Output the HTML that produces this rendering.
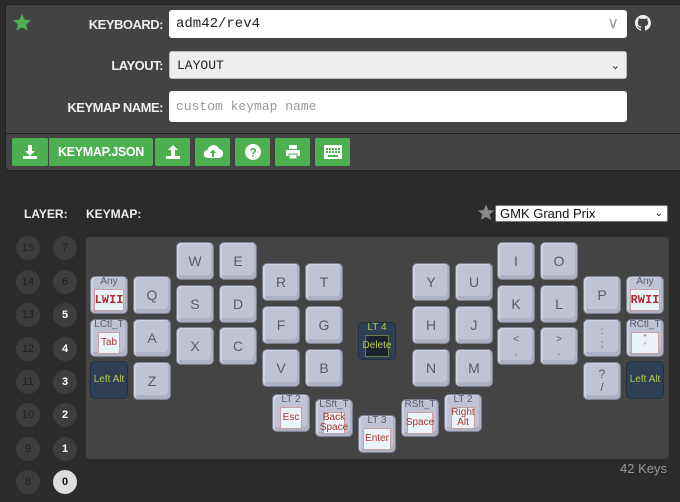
<!DOCTYPE html>
<html><head><meta charset="utf-8"><style>
*{box-sizing:border-box;margin:0;padding:0}
body{width:680px;height:502px;background:#2b2b2b;font-family:"Liberation Sans",sans-serif;position:relative;overflow:hidden}
.abs{position:absolute}
.panel{left:5px;top:4px;width:690px;height:167px;background:#434343;border:1px solid #222;border-radius:4px}
.lbl{position:absolute;color:#eee;font-weight:bold;font-size:13px;text-align:right;width:160px;letter-spacing:-0.5px}
.inp{position:absolute;left:169px;width:458px;border-radius:3px;font-family:"Liberation Mono",monospace;font-size:13px;padding-left:7px;color:#222}
.btn{position:absolute;top:138px;height:28px;background:#4caf50;border-radius:2px;color:#fff;display:flex;align-items:center;justify-content:center;font-weight:bold;font-size:12.5px;letter-spacing:-0.3px}
.kbd{left:86px;top:237px;width:583px;height:222px;background:#444;border-radius:4px}
.k{position:absolute;width:38px;height:38px;background:#c0c3d3;border:1px solid #7d8090;border-radius:5px;box-shadow:inset 2px 1px 0 #ced1df,inset -2px -4px 0 #aeb1c1;color:#555b6e;font-size:14px;display:flex;align-items:center;justify-content:center;flex-direction:column;text-align:center;line-height:1}
.k .t{font-size:10px;color:#555b6e;margin-top:-3px;margin-bottom:2px}
.k .in{background:#eaf4f8;border:1px solid #c9a0a0;color:#a33;font-size:10px;width:28px;height:22px;display:flex;align-items:center;justify-content:center;line-height:1}
.k.d{background:#2e3e55;border-color:#25303f;box-shadow:none;color:#b7c94a;font-size:10px}
.k.d .t{color:#b7c94a}
.c{position:absolute;width:24px;height:24px;border-radius:50%;background:#3d3d3d;color:#1e1e1e;font-size:11px;display:flex;align-items:center;justify-content:center}
.c.w{color:#fff;font-weight:bold}
</style></head><body>
<div class="abs panel"></div>
<svg class="abs" style="left:12px;top:13px" width="20" height="20" viewBox="0 0 24 24"><path d="M12 1l3.2 7 7.6.7-5.8 5 1.8 7.5L12 17.3 5.2 21.2 7 13.7 1.2 8.7l7.6-.7z" fill="#4caf50"/></svg>
<div class="lbl" style="left:3px;top:17px">KEYBOARD:</div>
<div class="inp" style="top:10px;height:28px;background:#fff;line-height:28px;font-size:14px">adm42/rev4<span style="position:absolute;right:8px;top:0;color:#999;font-family:'Liberation Sans';font-size:16px">&#8744;</span></div>
<svg class="abs" style="left:635px;top:15px" width="16" height="16" viewBox="0 0 16 16"><path fill="#eee" d="M8 0C3.6 0 0 3.6 0 8c0 3.5 2.3 6.5 5.5 7.6.4.1.5-.2.5-.4v-1.4c-2.2.5-2.7-1-2.7-1-.4-.9-.9-1.200-.9-1.2-.7-.5.1-.5.1-.5.8.1 1.2.8 1.2.8.7 1.2 1.9.9 2.3.7.1-.5.3-.9.5-1.1-1.8-.2-3.6-.9-3.6-4 0-.9.3-1.6.8-2.1-.1-.2-.4-1 .1-2.1 0 0 .7-.2 2.2.8.6-.2 1.3-.3 2-.3s1.4.1 2 .3c1.5-1 2.2-.8 2.2-.8.4 1.1.2 1.9.1 2.1.5.6.8 1.3.8 2.1 0 3.1-1.9 3.7-3.6 3.9.3.3.5.8.5 1.5v2.2c0 .2.1.5.6.4C13.7 14.5 16 11.5 16 8c0-4.4-3.6-8-8-8z"/></svg>
<div class="lbl" style="left:3px;top:58px">LAYOUT:</div>
<div class="inp" style="top:51px;height:28px;background:#eee;line-height:28px;border:1px solid #bbb">LAYOUT<span style="position:absolute;right:6px;top:0;font-size:11px;font-family:'Liberation Sans'">&#8964;</span></div>
<div class="lbl" style="left:3px;top:100px">KEYMAP NAME:</div>
<div class="inp" style="top:91px;height:31px;background:#fff;line-height:31px;color:#999">custom keymap name</div>
<div class="abs" style="left:5px;top:133px;width:680px;height:1px;background:#222"></div>
<div class="btn" style="left:12px;width:36px"><svg width="16" height="16" viewBox="0 0 16 16" fill="#fff"><path d="M6 1h4v6h3l-5 5-5-5h3z"/><rect x="1" y="12" width="14" height="3"/></svg></div>
<div class="btn" style="left:49px;width:104px">KEYMAP.JSON</div>
<div class="btn" style="left:155px;width:35px"><svg width="16" height="16" viewBox="0 0 16 16" fill="#fff"><path d="M6 12h4V6h3L8 1 3 6h3z"/><rect x="1" y="12" width="14" height="3"/></svg></div>
<div class="btn" style="left:195px;width:35px"><svg width="20" height="16" viewBox="0 0 20 16"><path fill="#fff" d="M5 14a4 4 0 0 1-.5-8A6 6 0 0 1 16 5a4.5 4.5 0 0 1-.5 9z"/><path fill="#4caf50" d="M9 13V9H7l3-3.5L13 9h-2v4z"/></svg></div>
<div class="btn" style="left:235px;width:35px"><svg width="16" height="16" viewBox="0 0 16 16"><circle cx="8" cy="8" r="8" fill="#fff"/><text x="8" y="12.5" text-anchor="middle" font-size="12" font-weight="bold" fill="#4caf50" font-family="Liberation Sans">?</text></svg></div>
<div class="btn" style="left:275px;width:35px"><svg width="16" height="16" viewBox="0 0 16 16" fill="#fff"><rect x="4" y="1" width="8" height="4"/><rect x="1" y="6" width="14" height="6" rx="1"/><rect x="4" y="10" width="8" height="5" stroke="#4caf50"/></svg></div>
<div class="btn" style="left:315px;width:35px"><svg width="18" height="14" viewBox="0 0 18 14"><rect width="18" height="14" rx="1" fill="#fff"/><g fill="#4caf50"><rect x="2" y="3" width="2" height="2"/><rect x="5" y="3" width="2" height="2"/><rect x="8" y="3" width="2" height="2"/><rect x="11" y="3" width="2" height="2"/><rect x="14" y="3" width="2" height="2"/><rect x="2" y="6" width="2" height="2"/><rect x="5" y="6" width="2" height="2"/><rect x="8" y="6" width="2" height="2"/><rect x="11" y="6" width="2" height="2"/><rect x="14" y="6" width="2" height="2"/><rect x="4" y="10" width="10" height="2"/></g></svg></div>
<div class="abs" style="left:24px;top:207px;color:#eee;font-weight:bold;font-size:12px">LAYER:</div>
<div class="abs" style="left:86px;top:207px;color:#eee;font-weight:bold;font-size:12px">KEYMAP:</div>
<svg class="abs" style="left:477px;top:204px" width="18" height="18" viewBox="0 0 24 24"><path d="M12 1l3.2 7 7.6.7-5.8 5 1.8 7.5L12 17.3 5.2 21.2 7 13.7 1.2 8.7l7.6-.7z" fill="#888"/></svg>
<div class="abs" style="left:495px;top:205px;width:173px;height:17px;background:#fff;border:1px solid #777;border-radius:2px;font-size:13px;padding-left:4px;line-height:15px;color:#111">GMK Grand Prix<span style="position:absolute;right:4px;font-size:10px">&#8964;</span></div>
<div class="abs kbd"></div>
<div class="c" style="left:16px;top:236px">15</div><div class="c" style="left:53px;top:236px">7</div>
<div class="c" style="left:16px;top:270px">14</div><div class="c" style="left:53px;top:270px">6</div>
<div class="c" style="left:16px;top:303px">13</div><div class="c w" style="left:53px;top:303px">5</div>
<div class="c" style="left:16px;top:337px">12</div><div class="c w" style="left:53px;top:337px">4</div>
<div class="c" style="left:16px;top:370px">11</div><div class="c w" style="left:53px;top:370px">3</div>
<div class="c" style="left:16px;top:403px">10</div><div class="c w" style="left:53px;top:403px">2</div>
<div class="c" style="left:16px;top:437px">9</div><div class="c w" style="left:53px;top:437px">1</div>
<div class="c" style="left:16px;top:470px">8</div><div class="c" style="left:53px;top:470px;background:#ddd;color:#111;font-weight:bold">0</div>

<div class="k" style="left:90px;top:276px"><div class="t">Any</div><div class="in" style="font-family:'Liberation Mono';font-size:12px;font-weight:bold;width:30px">LWII</div></div>
<div class="k" style="left:90px;top:319px"><div class="t">LCtl_T</div><div class="in" style="width:22px">Tab</div></div>
<div class="k d" style="left:90px;top:361px">Left Alt</div>
<div class="k" style="left:133px;top:276px">Q</div>
<div class="k" style="left:133px;top:319px">A</div>
<div class="k" style="left:133px;top:362px">Z</div>
<div class="k" style="left:176px;top:242px">W</div>
<div class="k" style="left:176px;top:285px">S</div>
<div class="k" style="left:176px;top:327px">X</div>
<div class="k" style="left:219px;top:242px">E</div>
<div class="k" style="left:219px;top:285px">D</div>
<div class="k" style="left:219px;top:327px">C</div>
<div class="k" style="left:262px;top:263px">R</div>
<div class="k" style="left:262px;top:306px">F</div>
<div class="k" style="left:262px;top:349px">V</div>
<div class="k" style="left:305px;top:263px">T</div>
<div class="k" style="left:305px;top:306px">G</div>
<div class="k" style="left:305px;top:349px">B</div>
<div class="k d" style="left:358px;top:322px"><div class="t">LT 4</div><div class="in" style="background:#1c2230;border-color:#6a7a40;color:#b7c94a;width:24px;overflow:visible">Delete</div></div>
<div class="k" style="left:272px;top:394px"><div class="t">LT 2</div><div class="in" style="width:22px">Esc</div></div>
<div class="k" style="left:315px;top:399px"><div class="t">LSft_T</div><div class="in" style="width:22px;flex-direction:column">Back<br>Space</div></div>
<div class="k" style="left:358px;top:415px"><div class="t">LT 3</div><div class="in">Enter</div></div>
<div class="k" style="left:401px;top:399px"><div class="t">RSft_T</div><div class="in" style="width:26px">Space</div></div>
<div class="k" style="left:444px;top:394px"><div class="t">LT 2</div><div class="in" style="width:24px;text-align:center">Right<br>Alt</div></div>
<div class="k" style="left:412px;top:263px">Y</div>
<div class="k" style="left:412px;top:306px">H</div>
<div class="k" style="left:412px;top:349px">N</div>
<div class="k" style="left:455px;top:263px">U</div>
<div class="k" style="left:455px;top:306px">J</div>
<div class="k" style="left:455px;top:349px">M</div>
<div class="k" style="left:497px;top:242px">I</div>
<div class="k" style="left:497px;top:285px">K</div>
<div class="k" style="left:497px;top:327px;font-size:10px;line-height:1.3">&lt;<br>,</div>
<div class="k" style="left:540px;top:242px">O</div>
<div class="k" style="left:540px;top:285px">L</div>
<div class="k" style="left:540px;top:327px;font-size:10px;line-height:1.3">&gt;<br>.</div>
<div class="k" style="left:583px;top:276px">P</div>
<div class="k" style="left:583px;top:319px;font-size:10px;line-height:1.3">:<br>;</div>
<div class="k" style="left:583px;top:362px;font-size:12px;line-height:1.1">?<br>/</div>
<div class="k" style="left:626px;top:276px"><div class="t">Any</div><div class="in" style="font-family:'Liberation Mono';font-size:12px;font-weight:bold;width:30px">RWII</div></div>
<div class="k" style="left:626px;top:319px"><div class="t">RCtl_T</div><div class="in" style="line-height:.8;font-size:9px">"<br>'</div></div>
<div class="k d" style="left:626px;top:361px">Left Alt</div>
<div class="abs" style="left:620px;top:461px;color:#999;font-size:13px">42 Keys</div>
</body></html>
